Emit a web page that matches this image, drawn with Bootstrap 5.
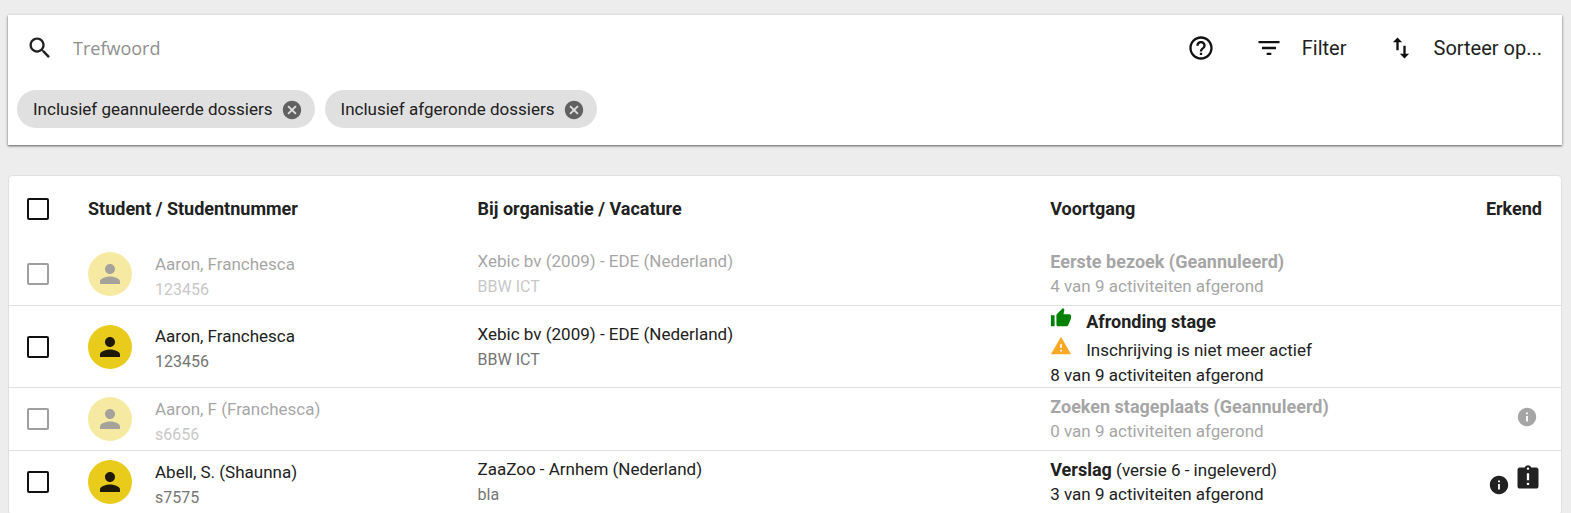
<!DOCTYPE html>
<html lang="nl">
<head>
<meta charset="utf-8">
<meta name="viewport" content="width=device-width, initial-scale=1">
<title>Dossiers</title>
<link rel="stylesheet" href="https://cdn.jsdelivr.net/npm/bootstrap@5.3.0/dist/css/bootstrap.min.css">
<style>
  body { background: #ededed; color: #212121; font-family: Roboto, sans-serif; font-size: 17px; line-height: 24px; padding: 15px 9px 0 8px; }
  svg { fill: currentColor; display: block; flex: none; }
  .ic-lg { width: 28px; height: 28px; }
  .ic-md { width: 22px; height: 22px; }

  .search-panel { background: #fff; margin-bottom: 30px; padding: 14px 20px 17px 9px; box-shadow: 0 1px 2px rgba(0,0,0,.55), 0 1px 4px rgba(0,0,0,.12); }
  .search-row { height: 38px; padding-left: 9px; column-gap: 40px; }
  .search-label { column-gap: 19px; min-width: 0; }
  .search-field { border: 0; outline: 0; background: none; padding: 0; font-family: "Open Sans", sans-serif; font-size: 18px; min-width: 0; }
  .search-field::placeholder { color: #8f8f8f; opacity: 1; }
  .tool { border: 0; background: none; padding: 0; color: #212121; font-size: 20px; display: flex; align-items: center; column-gap: 19px; }
  .tool svg { color: #111; }
  .chips { margin-top: 23px; gap: 10px; }
  .chip { height: 38px; border-radius: 19px; background: #e0e0e0; padding: 0 12px 0 16px; gap: 8px; }
  .chip button { border: 0; padding: 2px 0 0; background: none; color: #616161; }

  .list-panel { background: #fff; border: 1px solid #e0e0e0; border-radius: 4px; overflow: hidden; }
  .dossiers { width: 100%; table-layout: fixed; border-collapse: separate; border-spacing: 0; }
  .dossiers th, .dossiers td { padding: 0; vertical-align: middle; }
  .dossiers thead th { height: 67px; font-weight: 700; font-size: 18px; padding-bottom: 2px; }
  .dossiers tbody td { height: 63px; border-bottom: 1px solid #e0e0e0; }
  .dossiers b { font-size: 18px; line-height: 20px; font-weight: 700; }
  .col-check { width: 79px; }
  .col-student { width: 25.1%; }
  .col-org { width: 36.9%; }
  .col-erkend { width: 120px; }
  .pick { appearance: none; display: block; width: 22px; height: 22px; margin: 0 0 0 18px; border: 2px solid #111; border-radius: 2px; background: #fff; }
  .avatar { width: 44px; height: 44px; border-radius: 50%; background: #e9cc1b; color: #1f1a04; flex: none; }
  .who { margin-left: 23px; padding-top: 5px; }
  .minor { color: #757575; font-size: 16px; padding-top: 2px; }
  .cancelled td > * { opacity: .4; }
  .dossiers tbody .flags { padding-top: 1px; }
  .flag { gap: 14px; height: 28px; }
  .flag svg { align-self: flex-start; }
  .flag span { padding-top: 3px; }
  .thumb { color: #008000; }
  .warn { color: #f9a825; }
  .dossiers .marks { padding-right: 19px; }
</style>
</head>
<body>
<svg width="0" height="0" class="position-absolute" aria-hidden="true">
  <symbol id="person" viewBox="0 0 24 24"><path d="M12 12c2.210 0 4-1.790 4-4s-1.790-4-4-4-4 1.790-4 4 1.790 4 4 4zm0 2c-2.670 0-8 1.340-8 4v2h16v-2c0-2.660-5.330-4-8-4z"/></symbol>
  <symbol id="cancel" viewBox="0 0 24 24"><path d="M12 2C6.470 2 2 6.470 2 12s4.470 10 10 10 10-4.470 10-10S17.530 2 12 2zm5 13.590L15.590 17 12 13.410 8.410 17 7 15.590 10.590 12 7 8.410 8.410 7 12 10.590 15.590 7 17 8.410 13.410 12 17 15.590z"/></symbol>
  <symbol id="info" viewBox="0 0 24 24"><path d="M12 2C6.480 2 2 6.480 2 12s4.480 10 10 10 10-4.480 10-10S17.520 2 12 2zm1 15h-2v-6h2v6zm0-8h-2V7h2v2z"/></symbol>
</svg>

<section class="search-panel">
  <div class="search-row d-flex align-items-center">
    <label class="search-label d-flex align-items-center flex-grow-1">
      <svg class="ic-lg" viewBox="0 0 24 24"><path d="M15.500 14h-.79l-.28-.27C15.410 12.590 16 11.110 16 9.500 16 5.910 13.090 3 9.500 3S3 5.910 3 9.500 5.910 16 9.500 16c1.610 0 3.090-.59 4.230-1.570l.27.28v.79l5 4.990L20.490 19l-4.990-5zm-6 0C7.010 14 5 11.990 5 9.500S7.010 5 9.500 5 14 7.010 14 9.500 11.990 14 9.500 14z"/></svg>
      <input class="search-field flex-grow-1" type="text" placeholder="Trefwoord" aria-label="Trefwoord">
    </label>
    <button class="tool" type="button" aria-label="Help"><svg class="ic-lg" viewBox="0 0 24 24"><path d="M11 18h2v-2h-2v2zm1-16C6.480 2 2 6.480 2 12s4.480 10 10 10 10-4.480 10-10S17.520 2 12 2zm0 18c-4.410 0-8-3.590-8-8s3.590-8 8-8 8 3.590 8 8-3.590 8-8 8zm0-14c-2.210 0-4 1.790-4 4h2c0-1.100.9-2 2-2s2 .9 2 2c0 2-3 1.750-3 5h2c0-2.250 3-2.500 3-5 0-2.210-1.790-4-4-4z"/></svg></button>
    <button class="tool" type="button"><svg class="ic-lg" viewBox="0 0 24 24"><path d="M10 18h4v-2h-4v2zM3 6v2h18V6H3zm3 7h12v-2H6v2z"/></svg><span>Filter</span></button>
    <button class="tool" type="button"><svg class="ic-lg" viewBox="0 0 24 24"><path d="M9 3L5 6.990h3V14h2V6.990h3L9 3zm7 14.010V10h-2v7.010h-3L15 21l4-3.990h-3z"/></svg><span>Sorteer op...</span></button>
  </div>
  <div class="chips d-flex flex-wrap">
    <span class="chip d-flex align-items-center">Inclusief geannuleerde dossiers<button type="button" aria-label="Verwijderen"><svg class="ic-md"><use href="#cancel"/></svg></button></span>
    <span class="chip d-flex align-items-center">Inclusief afgeronde dossiers<button type="button" aria-label="Verwijderen"><svg class="ic-md"><use href="#cancel"/></svg></button></span>
  </div>
</section>

<section class="list-panel">
  <table class="dossiers">
    <colgroup><col class="col-check"><col class="col-student"><col class="col-org"><col><col class="col-erkend"></colgroup>
    <thead>
      <tr>
        <th><input class="pick" type="checkbox" aria-label="Alles selecteren"></th>
        <th>Student / Studentnummer</th>
        <th>Bij organisatie / Vacature</th>
        <th>Voortgang</th>
        <th class="marks text-end">Erkend</th>
      </tr>
    </thead>
    <tbody>
      <tr class="cancelled">
        <td><input class="pick" type="checkbox" aria-label="Selecteer Aaron, Franchesca"></td>
        <td><div class="d-flex align-items-center"><span class="avatar d-flex align-items-center justify-content-center"><svg width="30" height="30"><use href="#person"/></svg></span><div class="who"><div>Aaron, Franchesca</div><div class="minor">123456</div></div></div></td>
        <td><div>Xebic bv (2009) - EDE (Nederland)</div><div class="minor">BBW ICT</div></td>
        <td><div><b>Eerste bezoek (Geannuleerd)</b></div><div>4 van 9 activiteiten afgerond</div></td>
        <td></td>
      </tr>
      <tr>
        <td><input class="pick" type="checkbox" aria-label="Selecteer Aaron, Franchesca"></td>
        <td><div class="d-flex align-items-center"><span class="avatar d-flex align-items-center justify-content-center"><svg width="30" height="30"><use href="#person"/></svg></span><div class="who"><div>Aaron, Franchesca</div><div class="minor">123456</div></div></div></td>
        <td><div>Xebic bv (2009) - EDE (Nederland)</div><div class="minor">BBW ICT</div></td>
        <td class="flags">
          <div class="flag d-flex"><svg class="ic-md thumb" viewBox="0 0 24 24"><path d="M1 21h4V9H1v12zm22-11c0-1.100-.9-2-2-2h-6.310l.95-4.570.03-.32c0-.41-.17-.79-.44-1.060L14.170 1 7.590 7.590C7.220 7.950 7 8.450 7 9v10c0 1.100.9 2 2 2h9c.83 0 1.540-.5 1.840-1.220l3.020-7.050c.09-.23.14-.47.14-.73v-2z"/></svg><span><b>Afronding stage</b></span></div>
          <div class="flag d-flex"><svg class="ic-md warn" viewBox="0 0 24 24"><path d="M1 21h22L12 2 1 21zm12-3h-2v-2h2v2zm0-4h-2v-4h2v4z"/></svg><span>Inschrijving is niet meer actief</span></div>
          <div>8 van 9 activiteiten afgerond</div>
        </td>
        <td></td>
      </tr>
      <tr class="cancelled">
        <td><input class="pick" type="checkbox" aria-label="Selecteer Aaron, F (Franchesca)"></td>
        <td><div class="d-flex align-items-center"><span class="avatar d-flex align-items-center justify-content-center"><svg width="30" height="30"><use href="#person"/></svg></span><div class="who"><div>Aaron, F (Franchesca)</div><div class="minor">s6656</div></div></div></td>
        <td></td>
        <td><div><b>Zoeken stageplaats (Geannuleerd)</b></div><div>0 van 9 activiteiten afgerond</div></td>
        <td class="marks"><div class="d-flex justify-content-end pe-1 pb-1"><svg class="ic-md"><use href="#info"/></svg></div></td>
      </tr>
      <tr>
        <td><input class="pick" type="checkbox" aria-label="Selecteer Abell, S. (Shaunna)"></td>
        <td><div class="d-flex align-items-center"><span class="avatar d-flex align-items-center justify-content-center"><svg width="30" height="30"><use href="#person"/></svg></span><div class="who"><div>Abell, S. (Shaunna)</div><div class="minor">s7575</div></div></div></td>
        <td><div>ZaaZoo - Arnhem (Nederland)</div><div class="minor">bla</div></td>
        <td><div><b>Verslag</b> (versie 6 - ingeleverd)</div><div>3 van 9 activiteiten afgerond</div></td>
        <td class="marks"><div class="d-flex justify-content-end align-items-end gap-1 pb-1"><svg class="ic-md"><use href="#info"/></svg><svg class="ic-lg mb-1" viewBox="0 0 24 24"><path d="M19 3h-4.180C14.400 1.840 13.300 1 12 1c-1.300 0-2.400.84-2.820 2H5c-1.100 0-2 .9-2 2v14c0 1.100.9 2 2 2h14c1.100 0 2-.9 2-2V5c0-1.100-.9-2-2-2zm-6 15h-2v-2h2v2zm0-4h-2V8h2v6zm-1-9c-.55 0-1-.45-1-1s.45-1 1-1 1 .45 1 1-.45 1-1 1z"/></svg></div></td>
      </tr>
    </tbody>
  </table>
</section>
<script src="https://cdn.jsdelivr.net/npm/bootstrap@5.3.0/dist/js/bootstrap.bundle.min.js"></script>
</body>
</html>
